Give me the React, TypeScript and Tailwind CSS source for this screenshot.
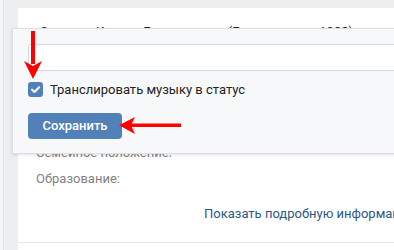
import React from 'react';

const rows = [
  { label: 'День рождения:', value: '' },
  { label: 'Город:', value: '' },
  { label: 'Языки:', value: '' },
  { label: 'Семейное положение:', value: '' },
  { label: 'Образование:', value: '' },
];

const CheckIcon: React.FC = () => (
  <svg width="15" height="15" viewBox="0 0 15 15" fill="none">
    <path d="M4 7.6l2.4 2.4L11.2 5.2" stroke="#fff" strokeWidth={2} strokeLinecap="round" strokeLinejoin="round" />
  </svg>
);

const StatusPopup: React.FC = () => (
  <div className="absolute left-[12px] top-[28px] right-[-12px] border border-[#dcdfe3] bg-[#f7f8fa] shadow-[0_1px_3px_rgba(0,0,0,0.12)] pl-[15px] pt-[15px] pb-[14px]">
    <div className="h-[27px] bg-white border border-[#d3d9de] rounded-[2px]" />
    <label className="mt-[11px] flex items-center h-[15px] gap-[7px] text-[13px] text-[#222]">
      <span className="w-[15px] h-[15px] rounded-[3px] bg-[#5181b8] flex items-center justify-center">
        <CheckIcon />
      </span>
      <span className="leading-[15px]">Транслировать музыку в статус</span>
    </label>
    <button className="mt-[16px] w-[94px] h-[26px] rounded-[4px] bg-[#5181b8] text-white text-[13px] font-medium flex items-center justify-center">
      Сохранить
    </button>
  </div>
);

const Arrows: React.FC = () => (
  <svg className="absolute inset-0 pointer-events-none" width="394" height="250" viewBox="0 0 394 250">
    <rect x="31" y="31" width="4" height="33" fill="#f00" />
    <polygon points="24,61 33,79 42,61 33,66" fill="#f00" />
    <rect x="130" y="123.5" width="51" height="3.5" fill="#f00" />
    <polygon points="119,125.3 135,117 131,125.3 135,134" fill="#f00" />
  </svg>
);

export default function App() {
  return (
    <div className="relative w-[394px] h-[250px] overflow-hidden bg-[#edeef0] font-['Roboto',sans-serif] text-[13px]">
      <div className="flex h-full">
        <div className="w-[3px] shrink-0 bg-[#f3f4f6] border-r border-[#e1e3e6] box-content" />
        <div className="w-[14px] shrink-0" />
        <div className="flex-1 min-w-0 mt-[8px] bg-white pt-[11px]">
          <div className="pl-[22px] leading-[26px] text-[#222] whitespace-nowrap overflow-hidden">
            Слушает Кино — Группа крови (Группа крови, 1988)
          </div>
          <div className="mt-[17px]">
            {rows.map((r) => (
              <div key={r.label} className="flex pl-[18px] h-[26px] leading-[26px]">
                <div className="w-[168px] shrink-0 text-[#828282] whitespace-nowrap">{r.label}</div>
                <div className="text-[#2a5885]">{r.value}</div>
              </div>
            ))}
          </div>
          <div className="mt-[8.5px] pl-[186px] h-[26px] leading-[26px] whitespace-nowrap overflow-hidden text-[#2a5885]">
            Показать подробную информацию
          </div>
          <div className="mt-[15px] border-t border-[#e7e8ec]" />
        </div>
      </div>
      <StatusPopup />
      <Arrows />
    </div>
  );
}
